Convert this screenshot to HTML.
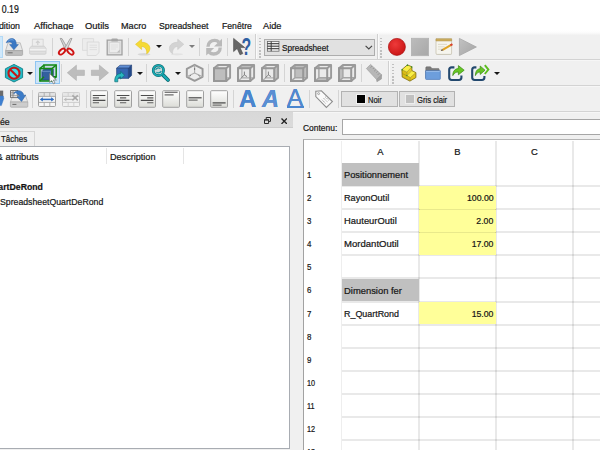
<!DOCTYPE html>
<html lang="fr">
<head>
<meta charset="utf-8">
<title>FreeCAD 0.19</title>
<style>
html,body{margin:0;padding:0}
body{width:600px;height:450px;overflow:hidden;position:relative;background:#fff;
 font-family:"Liberation Sans",sans-serif;font-size:9.4px;color:#111;-webkit-text-stroke:.22px #222}
.a{position:absolute}
.t{position:absolute;white-space:nowrap;line-height:12px;height:12px;transform-origin:0 0;transform:scaleX(.93)}
.r{transform-origin:100% 0}
.bg{position:absolute;left:0;width:600px}
.vs{position:absolute;width:1px;background:#d4d4d4;height:18px}
.hd{position:absolute;width:1.6px;height:20px;margin-left:.4px;
 background:repeating-linear-gradient(180deg,#c0c0c0 0 1.3px,transparent 1.3px 3.05px)}
.ic{position:absolute;width:18px;height:18px;overflow:visible}
.dd{position:absolute;width:0;height:0;border-left:3.3px solid transparent;border-right:3.3px solid transparent;border-top:3.7px solid #161616}
.btn{position:absolute;height:16.6px;background:#e1e1e1;border:1px solid #b2b2b2;box-sizing:border-box}
.fa{-webkit-text-stroke:0;font-size:23px;line-height:24px;color:#4a86cf;text-shadow:0 0 .6px #2f66ad;transform-origin:0 0}
.gl{background:rgba(0,0,0,.085)}
.c{transform-origin:50% 0}
.sw{position:absolute;width:8px;height:8px;box-sizing:border-box}
</style>
</head>
<body>

<!-- title + menu bar -->
<div class="t r" id="ttl" style="right:581.6px;top:3.5px;font-size:10.3px;transform:scaleX(.85)">FreeCAD 0.19</div>
<div id="menubar" style="font-size:9.8px">
 <div class="t r" style="right:579.6px;top:20.2px;transform:scaleX(.9)">Édition</div>
 <div class="t" style="left:33.6px;top:20.2px;transform:scaleX(.97)">Affichage</div>
 <div class="t" style="left:85px;top:20.2px;transform:scaleX(.96)">Outils</div>
 <div class="t" style="left:121.4px;top:20.2px;transform:scaleX(.93)">Macro</div>
 <div class="t" style="left:159.3px;top:20.2px;transform:scaleX(.89)">Spreadsheet</div>
 <div class="t" style="left:221.8px;top:20.2px;transform:scaleX(.885)">Fenêtre</div>
 <div class="t" style="left:263.4px;top:20.2px;transform:scaleX(.94)">Aide</div>
</div>

<!-- toolbar area background -->
<div class="bg" style="top:30px;height:5px;background:linear-gradient(180deg,#ffffff 0,#fdfdfd 40%,#fafafa 60%,#f6f6f6 80%,#f1f1f1 100%)"></div>
<div class="bg" id="tbbg" style="top:35px;height:415px;background:#f0f0f0"></div>
<div class="bg" style="top:59px;height:1px;background:#d3d3d3"></div>
<div class="bg" style="top:60px;height:1px;background:#f6f6f6"></div>
<div class="bg" style="top:85px;height:1px;background:#d3d3d3"></div>
<div class="bg" style="top:86px;height:1px;background:#f6f6f6"></div>
<div class="bg" style="top:111px;height:1px;background:#d3d3d3"></div>
<div class="bg" style="top:112px;height:1px;background:#f6f6f6"></div>

<!-- ROW1 -->
<div id="row1">
 <!-- hovered button cut at left edge -->
 <div class="a" style="left:-22px;top:35.5px;width:24.5px;height:22.5px;box-sizing:border-box;background:#cfe8fb;border:1px solid #b3d9f5"></div>
 <!-- save as -->
 <svg class="ic" style="left:5px;top:38px" viewBox="0 0 18 18">
  <path d="M3 4.8H15.2L17.6 12.6H.6Z" fill="#e8e8e8" stroke="#acacac" stroke-width=".7"/>
  <path d="M.6 12.6H17.6V16.6Q17.6 17.4 16.8 17.4H1.4Q.6 17.4 .6 16.6Z" fill="#bdbdbd" stroke="#a0a0a0" stroke-width=".7"/>
  <path d="M2.6 14.8H7.6" stroke="#6e6e6e" stroke-width="1"/>
  <path d="M1.2 4.8C2.4 1.4 5.8-.2 8.4.8C10.4 1.6 11.3 3.6 11.3 6.6H13.4L8.9 11.8L4.6 6.6H7.3C7.2 4.4 5.2 3 1.2 4.8Z" fill="#3a78c4" stroke="#2c62a6" stroke-width=".5"/>
  <path d="M3 3.4C4.6 1.6 7 1.2 8.6 2.2" fill="none" stroke="#7fb0e6" stroke-width=".8"/>
 </svg>
 <!-- print (disabled) -->
 <svg class="ic" style="left:29px;top:38px" viewBox="0 0 18 18">
  <path d="M3.4 1.2H14.2V8.6H3.4Z" fill="#ededed" stroke="#d2d2d2" stroke-width=".8"/>
  <path d="M8.8 3V7M7 4.8L8.8 3L10.6 4.8" stroke="#cfcfcf" stroke-width="1.2" fill="none"/>
  <path d="M2.2 8.2H15.4L17 10.4V15.2Q17 16.2 16 16.2H1.6Q.6 16.2 .6 15.2V10.4Z" fill="#e0e0e0" stroke="#cdcdcd" stroke-width=".8"/>
  <path d="M.8 11.8H16.8" stroke="#f4f4f4" stroke-width="1.4"/>
  <path d="M.8 13.4H16.8" stroke="#d3d3d3" stroke-width=".8"/>
 </svg>
 <div class="vs" style="left:52px;top:38px"></div>
 <!-- cut -->
 <svg class="ic" style="left:58px;top:38px" viewBox="0 0 18 18">
  <path d="M2.2.4L4 .6L10.2 11.4L7.6 12.4Z" fill="#d4d4d4" stroke="#8e8e8e" stroke-width=".7"/>
  <path d="M14 .4L12.2.6L6 11.4L8.6 12.4Z" fill="#dcdcdc" stroke="#8e8e8e" stroke-width=".7"/>
  <ellipse cx="4" cy="13.6" rx="3.7" ry="2.1" transform="rotate(-42 4 13.6)" fill="none" stroke="#d01515" stroke-width="1.9"/>
  <ellipse cx="12.4" cy="13.6" rx="3.7" ry="2.1" transform="rotate(42 12.4 13.6)" fill="none" stroke="#d01515" stroke-width="1.9"/>
 </svg>
 <!-- copy (disabled) -->
 <svg class="ic" style="left:81.5px;top:38px" viewBox="0 0 18 18">
  <path d="M.5.6H11.6V12.4H.5Z" fill="#ececec" stroke="#d9d9d9" stroke-width=".8"/>
  <path d="M5.2 4H17V14.6L14 17.5H5.2Z" fill="#eeeeee" stroke="#d6d6d6" stroke-width=".8"/>
  <path d="M7.5 7.2H15M7.5 9.4H15M7.5 11.6H15" stroke="#dedede" stroke-width="1"/>
 </svg>
 <!-- paste -->
 <svg class="ic" style="left:105.5px;top:38px" viewBox="0 0 18 18">
  <path d="M1.2 2.2H16V16.8H1.2Z" fill="#e2e2e2" stroke="#a0a0a0" stroke-width="1.3"/>
  <path d="M3.4 4.4H13.8V14.6H3.4Z" fill="#ececec" stroke="#c9c9c9" stroke-width=".6"/>
  <path d="M5.4 3.6V1.6Q5.4.4 6.6.4H10.6Q11.8.4 11.8 1.6V3.6Z" fill="#a6a6a6"/>
  <path d="M10.8 14.6L13.8 11.6V14.6Z" fill="#bebebe"/>
  <path d="M5 7H12M5 9H12M5 11H10" stroke="#dcdcdc" stroke-width=".7"/>
 </svg>
 <div class="vs" style="left:128px;top:38px"></div>
 <!-- undo -->
 <svg class="ic" style="left:134.5px;top:38px" viewBox="0 0 18 18">
  <ellipse cx="9" cy="16.3" rx="6.5" ry="1.2" fill="#000" opacity=".1"/>
  <path d="M.5 6.3L6.6 1.2V4.3C11.4 4.1 15 6.9 14.9 10.5C14.8 13 13.4 14.9 11.6 15.8C12.2 12.4 10.6 8.8 6.6 8.4V11.5Z" fill="#f5da35" stroke="#dfbd22" stroke-width=".5"/>
 </svg>
 <div class="dd" style="left:156.2px;top:45.3px"></div>
 <!-- redo (disabled) -->
 <svg class="ic" style="left:168.6px;top:38px" viewBox="0 0 18 18">
  <ellipse cx="8" cy="16.3" rx="6" ry="1.1" fill="#000" opacity=".05"/>
  <path d="M14.8 6.3L8.7 1.2V4.3C3.9 4.1 .3 6.9 .4 10.5C.5 13 1.9 14.9 3.7 15.8C3.1 12.4 4.7 8.8 8.7 8.4V11.5Z" fill="#d3d3d3" stroke="#cacaca" stroke-width=".6"/>
 </svg>
 <div class="dd" style="left:189.2px;top:45.3px;border-top-color:#7d7d7d"></div>
 <div class="vs" style="left:199px;top:38px"></div>
 <!-- refresh -->
 <svg class="ic" style="left:206px;top:38px" viewBox="0 0 18 18">
  <path d="M2 8.8C2 4.6 5.2 2.4 8.6 2.4C10.4 2.4 11.8 3 13 4.2" fill="none" stroke="#b9b9b9" stroke-width="3.4"/>
  <path d="M16 .8V8.4H8Z" fill="#b9b9b9"/>
  <path d="M14.2 9.6C14.2 13.8 11 16 7.6 16C5.8 16 4.4 15.4 3.2 14.2" fill="none" stroke="#b9b9b9" stroke-width="3.4"/>
  <path d="M.2 17.6V10H8.2Z" fill="#b9b9b9"/>
 </svg>
 <div class="vs" style="left:227px;top:38px"></div>
 <!-- what's this -->
 <svg class="ic" style="left:233px;top:38px" viewBox="0 0 18 18">
  <path d="M.6.4V13.6L4.2 10.4L7 16.8L9.8 15.6L7 9.6H11.8Z" fill="#666" stroke="#484848" stroke-width=".6"/>
  <text transform="translate(8.6 17) scale(.66 1)" font-family="Liberation Sans, sans-serif" font-weight="bold" font-size="24" fill="#2f5fa3">?</text>
 </svg>
 <!-- toolbar break -->
 <div class="a" style="left:255px;top:34px;width:1px;height:25px;background:#d0d0d0"></div>
 <div class="a" style="left:256px;top:34px;width:1px;height:25px;background:#fafafa"></div>
 <div class="hd" style="left:258.8px;top:37.5px"></div>
 <!-- workbench combo -->
 <div class="a" style="left:263.5px;top:38.5px;width:111px;height:17px;box-sizing:border-box;background:#e1e1e1;border:1px solid #adadad"></div>
 <svg class="a" style="left:267.3px;top:41.2px;width:12.4px;height:10.6px" viewBox="0 0 12.4 10.6">
  <rect x=".4" y=".4" width="11.6" height="9.8" fill="#f4f4f4" stroke="#6a6a6a" stroke-width=".8"/>
  <path d="M.4 2.7H12M.4 5.2H12M.4 7.7H12" stroke="#2d2d2d" stroke-width="1"/>
  <path d="M4.2.4V10.2" stroke="#3a3a3a" stroke-width="1"/>
 </svg>
 <div class="t" style="left:281.6px;top:42.2px;transform:scaleX(.875)">Spreadsheet</div>
 <svg class="a" style="left:364px;top:44px;width:10px;height:7px" viewBox="0 0 10 7"><path d="M1.6 1.8L4.8 5L8 1.8" fill="none" stroke="#444" stroke-width="1.1"/></svg>
 <div class="a" style="left:376.5px;top:34px;width:1px;height:25px;background:#d0d0d0"></div>
 <div class="a" style="left:377.5px;top:34px;width:1px;height:25px;background:#fafafa"></div>
 <div class="hd" style="left:380px;top:37.5px"></div>
 <!-- macro record -->
 <svg class="ic" style="left:387.5px;top:38px" viewBox="0 0 18 18">
  <defs><radialGradient id="rg" cx=".4" cy=".35" r=".7"><stop offset="0" stop-color="#ee3a3a"/><stop offset="1" stop-color="#c91414"/></radialGradient></defs>
  <circle cx="8.9" cy="8.9" r="8.5" fill="url(#rg)" stroke="#a80f0f" stroke-width=".7"/>
 </svg>
 <!-- stop -->
 <svg class="ic" style="left:411.2px;top:38px" viewBox="0 0 18 18">
  <defs><linearGradient id="sg" x1="0" y1="0" x2="1" y2="1"><stop offset="0" stop-color="#bcbcbc"/><stop offset="1" stop-color="#a8a8a8"/></linearGradient></defs>
  <rect x=".4" y=".3" width="17.2" height="17.4" fill="url(#sg)" stroke="#b2b2b2" stroke-width=".8"/>
 </svg>
 <!-- edit macro -->
 <svg class="ic" style="left:435.4px;top:38px" viewBox="0 0 18 18">
  <path d="M1.4 16.2H16.4V17H1.4Z" fill="#b4b4b4" opacity=".6"/>
  <path d="M1 .8H16.6V15.2Q16.6 16.4 15.4 16.4H2.2Q1 16.4 1 15.2Z" fill="#f6f5ee" stroke="#c2bca8" stroke-width=".7"/>
  <path d="M1 .8H16.6V3H1Z" fill="#cdae5e" stroke="#b3934a" stroke-width=".5"/>
  <path d="M3 6.4H12M3 8.8H9.6M3 11.2H6.6" stroke="#d8d3c2" stroke-width=".8"/>
  <path d="M7.6 11.8L16.2 6.8" stroke="#dfa326" stroke-width="2.1"/>
  <path d="M5.6 13L8.2 12.6L7 10.8Z" fill="#6a5238"/>
  <path d="M15.4 7.3L17.4 6.1" stroke="#d9402e" stroke-width="2.1"/>
 </svg>
 <!-- execute macro -->
 <svg class="ic" style="left:459px;top:38px" viewBox="0 0 18 18">
  <defs><linearGradient id="pg" x1="0" y1="0" x2="1" y2="1"><stop offset="0" stop-color="#c2c2c2"/><stop offset="1" stop-color="#a4a4a4"/></linearGradient></defs>
  <path d="M.4.4L17.4 9L.4 17.6Z" fill="url(#pg)" stroke="#a2a2a2" stroke-width=".7"/>
 </svg>
</div>
<!-- ROW2 -->
<div id="row2">
 <!-- no-entry hexagon -->
 <svg class="ic" style="left:5px;top:63.8px;height:18.4px" viewBox="0 0 18 18.4">
  <path d="M9 .4L17.6 4.8V13.6L9 18L.4 13.6V4.8Z" fill="#22bcc6" stroke="#0f7a83" stroke-width=".9"/>
  <circle cx="9" cy="9.2" r="5.5" fill="#3fe0ea" stroke="#c21a1a" stroke-width="2.1"/>
  <path d="M5.2 5.4L12.8 13" stroke="#c21a1a" stroke-width="2.1"/>
 </svg>
 <div class="dd" style="left:27.4px;top:71.6px"></div>
 <!-- bounding box (checked) -->
 <div class="a" style="left:35.3px;top:61.3px;width:24.4px;height:22.4px;box-sizing:border-box;background:#cce4f7;border:1px solid #8fc5f2"></div>
 <svg class="ic" style="left:39px;top:64px" viewBox="0 0 18 18">
  <path d="M5 1H17.2V12.8H5Z" fill="#c4d6e6" stroke="#128812" stroke-width="1.5"/>
  <path d="M.9 4.6H13V17.1H.9Z" fill="#7d9cc4" opacity=".55"/>
  <path d="M3 7.4L5.6 5H14.4V13.6L11.6 16H3Z" fill="#33609f" stroke="#1f4173" stroke-width=".6"/>
  <path d="M3 7.4H11.6V16M11.6 7.4L14.4 5" stroke="#6f95cc" stroke-width=".8" fill="none"/>
  <path d="M.9 4.6H13V17.1H.9Z" fill="none" stroke="#128812" stroke-width="1.5"/>
  <path d="M.9 4.6L5 1M13 4.6L17.2 1M13 17.1L17.2 12.8M.9 17.1L5 12.8" stroke="#128812" stroke-width="1.4"/>
  <path d="M10.6 9.6V18.4L12.8 16.6L14.4 19.8L16 19L14.4 16H17.4Z" fill="#fbfbfb" stroke="#707070" stroke-width=".7"/>
 </svg>
 <div class="vs" style="left:61.3px;top:64px"></div>
 <!-- back / forward -->
 <svg class="ic" style="left:66.6px;top:64px" viewBox="0 0 18 18">
  <path d="M.3 8.8L9.4 1.2V6.2H17.4V11.4H9.4V16.4Z" fill="#bdbdbd" stroke="#adadad" stroke-width=".6"/>
 </svg>
 <svg class="ic" style="left:90.6px;top:64px" viewBox="0 0 18 18">
  <path d="M17.5 8.8L8.4 1.2V6.2H.4V11.4H8.4V16.4Z" fill="#bdbdbd" stroke="#adadad" stroke-width=".6"/>
 </svg>
 <!-- link / go to -->
 <svg class="ic" style="left:114.4px;top:64px" viewBox="0 0 18 18">
  <path d="M2.6 4.2L6 1.2H17.6L14.4 4.2Z" fill="#5f8ed4" stroke="#1c3d74" stroke-width=".6"/>
  <path d="M14.4 4.2L17.6 1.2V11.4L14.4 14.4Z" fill="#23498a" stroke="#1c3d74" stroke-width=".6"/>
  <path d="M2.6 4.2H14.4V14.4H2.6Z" fill="#3566b2" stroke="#1c3d74" stroke-width=".6"/>
  <path d="M.8 17.8C.4 12.6 3 9.6 6.6 9.6V7.4L10.6 11.2L6.6 15V12.8C4.6 12.8 3.4 14.6 3.8 17.8Z" fill="#27b7bf" stroke="#0c6f77" stroke-width=".7"/>
 </svg>
 <div class="dd" style="left:136.8px;top:71.6px"></div>
 <div class="vs" style="left:146.3px;top:64px"></div>
 <!-- zoom fit -->
 <svg class="ic" style="left:152.4px;top:64.4px" viewBox="0 0 18 18">
  <path d="M10.4 10.4L16 16" stroke="#0a646b" stroke-width="3.8" stroke-linecap="round"/>
  <path d="M10.4 10.4L16 16" stroke="#17aab3" stroke-width="2.4" stroke-linecap="round"/>
  <circle cx="6.4" cy="6.4" r="5.2" fill="#c9d9db" stroke="#0a646b" stroke-width="2.6"/>
  <circle cx="6.4" cy="6.4" r="5.2" fill="none" stroke="#17aab3" stroke-width="1.6"/>
  <path d="M3.6 5.8C4.2 4 6.6 3.4 8.4 4.6M9.2 7C8.6 8.8 6.2 9.4 4.4 8.2" stroke="#17959d" stroke-width="1.3" fill="none"/>
 </svg>
 <div class="dd" style="left:174.6px;top:71.6px"></div>
 <!-- isometric -->
 <svg class="ic" style="left:185.6px;top:64.4px" viewBox="0 0 18 18">
  <path d="M8.6.8L16.6 4.8V12.8L8.6 16.8L.8 12.8V4.8Z" fill="#ededed" stroke="#999999" stroke-width="1.9" stroke-linejoin="round"/>
  <path d="M8.6.8V9L.8 12.8M8.6 9L16.6 12.8" stroke="#adadad" stroke-width="1.1" fill="none"/>
  <path d="M5 11.2L3.6 12.4M12.4 11.2L13.8 12.4M8.6 4V6" stroke="#707070" stroke-width=".9"/>
 </svg>
 <div class="vs" style="left:207.7px;top:64px"></div>
 <!-- std views -->
 <svg class="ic" style="left:213.4px;top:64px" viewBox="0 0 18 18">
  <path d="M1.0 4.2L4.9 1.0L17.1 1.0L17.1 13.8L13.2 17.0L1.0 17.0Z" fill="#eaeaea"/>
  <path d="M4.9 13.8H17.1M4.9 1.0V13.8M1.0 17.0L4.9 13.8" fill="none" stroke="#b0b0b0" stroke-width="1.2"/>
  <path d="M1.0 4.2L13.2 4.2L13.2 17.0L1.0 17.0Z" fill="#bebebe"/>
  <path d="M1.0 4.2L4.9 1.0H17.1V13.8L13.2 17.0M13.2 4.2L17.1 1.0" fill="none" stroke="#9a9a9a" stroke-width="1.9" stroke-linejoin="round"/>
  <path d="M1.0 4.2H13.2V17.0H1.0Z" fill="none" stroke="#979797" stroke-width="2"/>
 </svg>
 <svg class="ic" style="left:237.4px;top:64px" viewBox="0 0 18 18">
  <path d="M1.0 4.2L4.9 1.0L17.1 1.0L17.1 13.8L13.2 17.0L1.0 17.0Z" fill="#eaeaea"/>
  <path d="M4.9 13.8H17.1M4.9 1.0V13.8M1.0 17.0L4.9 13.8" fill="none" stroke="#b0b0b0" stroke-width="1.2"/>
  <path d="M1.0 4.2L4.9 1.0L17.1 1.0L13.2 4.2Z" fill="#bebebe"/>
  <path d="M1.0 4.2L4.9 1.0H17.1V13.8L13.2 17.0M13.2 4.2L17.1 1.0" fill="none" stroke="#9a9a9a" stroke-width="1.9" stroke-linejoin="round"/>
  <path d="M1.0 4.2H13.2V17.0H1.0Z" fill="none" stroke="#979797" stroke-width="2"/>
  <path d="M7.4 7.6V11L4.4 13.6M7.4 11L10 12.6" fill="none" stroke="#777" stroke-width=".9"/>
 </svg>
 <svg class="ic" style="left:261.4px;top:64px" viewBox="0 0 18 18">
  <path d="M1.0 4.2L4.9 1.0L17.1 1.0L17.1 13.8L13.2 17.0L1.0 17.0Z" fill="#eaeaea"/>
  <path d="M4.9 13.8H17.1M4.9 1.0V13.8M1.0 17.0L4.9 13.8" fill="none" stroke="#b0b0b0" stroke-width="1.2"/>
  <path d="M13.2 4.2L17.1 1.0L17.1 13.8L13.2 17.0Z" fill="#bebebe"/>
  <path d="M1.0 4.2L4.9 1.0H17.1V13.8L13.2 17.0M13.2 4.2L17.1 1.0" fill="none" stroke="#9a9a9a" stroke-width="1.9" stroke-linejoin="round"/>
  <path d="M1.0 4.2H13.2V17.0H1.0Z" fill="none" stroke="#979797" stroke-width="2"/>
  <path d="M7.4 7.6V11L4.4 13.6M7.4 11L10 12.6" fill="none" stroke="#777" stroke-width=".9"/>
 </svg>
 <div class="vs" style="left:284px;top:64px"></div>
 <svg class="ic" style="left:289.6px;top:64px" viewBox="0 0 18 18">
  <path d="M1.0 4.2L4.9 1.0L17.1 1.0L17.1 13.8L13.2 17.0L1.0 17.0Z" fill="#eaeaea"/>
  <path d="M4.9 1.0L17.1 1.0L17.1 13.8L4.9 13.8Z" fill="#bebebe"/>
  <path d="M4.9 13.8H17.1M4.9 1.0V13.8M1.0 17.0L4.9 13.8" fill="none" stroke="#a6a6a6" stroke-width="1.5"/>
  <path d="M1.0 4.2L4.9 1.0H17.1V13.8L13.2 17.0M13.2 4.2L17.1 1.0" fill="none" stroke="#9a9a9a" stroke-width="1.9" stroke-linejoin="round"/>
  <path d="M1.0 4.2H13.2V17.0H1.0Z" fill="none" stroke="#979797" stroke-width="2"/>
 </svg>
 <svg class="ic" style="left:313.6px;top:64px" viewBox="0 0 18 18">
  <path d="M1.0 4.2L4.9 1.0L17.1 1.0L17.1 13.8L13.2 17.0L1.0 17.0Z" fill="#eaeaea"/>
  <path d="M1.0 17.0L4.9 13.8L17.1 13.8L13.2 17.0Z" fill="#bebebe"/>
  <path d="M4.9 13.8H17.1M4.9 1.0V13.8M1.0 17.0L4.9 13.8" fill="none" stroke="#a6a6a6" stroke-width="1.5"/>
  <path d="M1.0 4.2L4.9 1.0H17.1V13.8L13.2 17.0M13.2 4.2L17.1 1.0" fill="none" stroke="#9a9a9a" stroke-width="1.9" stroke-linejoin="round"/>
  <path d="M1.0 4.2H13.2V17.0H1.0Z" fill="none" stroke="#979797" stroke-width="2"/>
 </svg>
 <svg class="ic" style="left:337.6px;top:64px" viewBox="0 0 18 18">
  <path d="M1.0 4.2L4.9 1.0L17.1 1.0L17.1 13.8L13.2 17.0L1.0 17.0Z" fill="#eaeaea"/>
  <path d="M1.0 4.2L4.9 1.0L4.9 13.8L1.0 17.0Z" fill="#bebebe"/>
  <path d="M4.9 13.8H17.1M4.9 1.0V13.8M1.0 17.0L4.9 13.8" fill="none" stroke="#a6a6a6" stroke-width="1.5"/>
  <path d="M1.0 4.2L4.9 1.0H17.1V13.8L13.2 17.0M13.2 4.2L17.1 1.0" fill="none" stroke="#9a9a9a" stroke-width="1.9" stroke-linejoin="round"/>
  <path d="M1.0 4.2H13.2V17.0H1.0Z" fill="none" stroke="#979797" stroke-width="2"/>
 </svg>
 <div class="vs" style="left:361.2px;top:64px"></div>
 <!-- measure -->
 <svg class="ic" style="left:366.4px;top:64px" viewBox="0 0 18 18">
  <path d="M4.6.4L15.6 10.8L10.6 15.5L.4 4.5Z" fill="#b7b7b7" stroke="#a0a0a0" stroke-width=".7"/>
  <path d="M15.6 10.8L15.4 15L10.9 17.7L10.6 15.5Z" fill="#a2a2a2" stroke="#979797" stroke-width=".6"/>
  <path d="M6.2 2L4.6 3.6M8 3.8L6.8 5M9.8 5.6L8.2 7.2M11.6 7.4L10.4 8.6M13.4 9.2L11.8 10.8" stroke="#8a8a8a" stroke-width=".8"/>
 </svg>
 <div class="a" style="left:387.6px;top:61px;width:1px;height:24px;background:#d0d0d0"></div>
 <div class="a" style="left:388.6px;top:61px;width:1px;height:24px;background:#fafafa"></div>
 <div class="hd" style="left:391.8px;top:63.5px"></div>
 <!-- part -->
 <svg class="ic" style="left:400.6px;top:64.4px" viewBox="0 0 18 18">
  <path d="M.9 5.6L5.9 8.1V11.6L9.4 13.6L8.9 17.1L1.2 13.1Z" fill="#d9bd14"/>
  <path d="M.9 5.6L6.4.9L10.9 2.8L5.9 8.1Z" fill="#f8ee45"/>
  <path d="M5.9 8.1L10.9 2.8V6.6L5.9 11.6Z" fill="#e6cd1c"/>
  <path d="M5.9 11.6L10.9 6.6L14.9 8.6L9.4 13.6Z" fill="#f8ee45"/>
  <path d="M9.4 13.6L14.9 8.6V13.6L8.9 17.1Z" fill="#e2c618"/>
  <path d="M.9 5.6L6.4.9L10.9 2.8V6.6L14.9 8.6V13.6L8.9 17.1L1.2 13.1Z" fill="none" stroke="#7a6708" stroke-width=".8" stroke-linejoin="round"/>
  <path d="M.9 5.6L5.9 8.1L10.9 2.8M5.9 8.1V11.6L9.4 13.6L14.9 8.6M5.9 11.6L10.9 6.6M9.4 13.6L8.9 17.1M1 9.4L5.9 11.8" fill="none" stroke="#a08a10" stroke-width=".6"/>
  <circle cx="6.4" cy="1.2" r=".8" fill="#2c8f2c"/><circle cx="10.6" cy="3" r=".8" fill="#2c8f2c"/><circle cx="1.2" cy="5.8" r=".8" fill="#2c8f2c"/><circle cx="5.9" cy="11.6" r=".7" fill="#2c8f2c"/>
 </svg>
 <!-- group -->
 <svg class="ic" style="left:424.5px;top:65.8px" viewBox="0 0 19 19">
  <path d="M.8 12.6V1.8Q.8 .8 1.8 .8H5.8L7.4 2.6H14Q15 2.6 15 3.6V12.6Z" fill="#7a7a7a" stroke="#666" stroke-width=".5"/>
  <path d="M.6 5H16.2V13.4Q16.2 14.2 15.4 14.2H1.4Q.6 14.2 .6 13.4Z" fill="#6d9edc" stroke="#4977b8" stroke-width=".7"/>
  <path d="M1.2 5.8H15.6" stroke="#a2c3ee" stroke-width=".8"/>
 </svg>
 <!-- link make -->
 <svg class="ic" style="left:448.4px;top:64px" viewBox="0 0 18 18">
  <path d="M3 4.4H12V15H3Z" fill="#eef1f4"/>
  <path d="M6.4 3.4H3.6Q1.2 3.4 1.2 5.8V13.6Q1.2 16 3.6 16H11Q13.4 16 13.4 13.6V11.6" fill="none" stroke="#22486e" stroke-width="2.1"/>
  <path d="M4.8 11.6C4.8 7 7.2 4.6 10.4 4.6V1.6L16.2 6.2L10.4 10.8V8C8 8 6.2 9 4.8 11.6Z" fill="#66c625" stroke="#3b8a12" stroke-width=".7"/>
 </svg>
 <!-- link make relative -->
 <svg class="ic" style="left:471.4px;top:64px" viewBox="0 0 18 18">
  <path d="M3 4.4H12V15H3Z" fill="#eef1f4"/>
  <path d="M5.4 3.4H3.6Q1.2 3.4 1.2 5.8V13.6Q1.2 16 3.6 16H11Q13.4 16 13.4 13.6V12" fill="none" stroke="#22486e" stroke-width="2.1"/>
  <path d="M4.4 11.6C4.4 7 6.4 4.8 9.2 4.8V2L14 6.2L9.2 10.4V8C7.2 8 5.6 9 4.4 11.6Z" fill="#66c625" stroke="#3b8a12" stroke-width=".7"/>
  <path d="M13.8 1.2L17.4 5.6L13.8 10" fill="none" stroke="#5bbd1e" stroke-width="1.9"/>
 </svg>
 <div class="dd" style="left:493.5px;top:71.6px"></div>
</div>
<!-- ROW3 -->
<div id="row3">
 <!-- cut-off icon at left edge -->
 <svg class="ic" style="left:-14.4px;top:90.4px" viewBox="0 0 18 18">
  <path d="M11 .6H17.2V6.2H11Z" fill="#6c6c6c"/>
  <path d="M10 6H17.4L17.8 8.6L15.4 15.6H10Z" fill="#3f80d0" stroke="#3571bd" stroke-width=".4"/>
 </svg>
 <!-- export sheet -->
 <svg class="ic" style="left:9.6px;top:90.2px" viewBox="0 0 18 18">
  <path d="M2.8 5.4H15.4L17.8 12H.4Z" fill="#e9e9e9" stroke="#b0b0b0" stroke-width=".7"/>
  <path d="M.4 12H17.8V16.4Q17.8 17.2 17 17.2H1.2Q.4 17.2 .4 16.4Z" fill="#cdcdcd" stroke="#a8a8a8" stroke-width=".7"/>
  <path d="M2.4 14.4H6.4" stroke="#6a6a6a" stroke-width="1"/>
  <path d="M.5.5H8V7.6H.5Z" fill="#dcdcdc" stroke="#5a5a5a" stroke-width=".8"/>
  <path d="M.5 2.8H8M.5 5.2H8M3 .5V7.6" stroke="#6b6b6b" stroke-width=".6"/>
  <path d="M3.6 3.4C5.4.8 9 0 11.2 1.4C12.8 2.4 13.6 3.8 13.8 5.4L15.8 5L11.6 11.4L7 6.9L9.6 6.4C9.2 4.6 7.4 3.2 3.6 3.4Z" fill="#3c7cc8" stroke="#2a5e9e" stroke-width=".5"/>
  <circle cx="5.6" cy="4" r="1" fill="#e8f0fa"/>
 </svg>
 <div class="vs" style="left:32.4px;top:90.2px"></div>
 <!-- merge cells -->
 <svg class="ic" style="left:38.2px;top:91.6px;height:15px" viewBox="0 0 18 15">
  <rect x=".5" y=".5" width="17" height="14" rx="1" fill="#f6f6f6" stroke="#979797" stroke-width=".9"/>
  <path d="M.5.5H17.5V4.4H.5Z" fill="#dadada" opacity=".7"/>
  <path d="M.5 4.4H17.5M.5 10.4H17.5" stroke="#a3a3a3" stroke-width=".9"/>
  <path d="M6.2.5V4.4M11.8.5V4.4M6.2 10.4V14.5M11.8 10.4V14.5" stroke="#a9a9a9" stroke-width=".9"/>
  <path d="M3.6 7.4H14.4" stroke="#2c6cc2" stroke-width="1.5"/>
  <path d="M1.8 7.4L4.8 5.2V9.6ZM16.2 7.4L13.2 5.2V9.6Z" fill="#2c6cc2"/>
 </svg>
 <!-- split cell (disabled) -->
 <svg class="ic" style="left:62.2px;top:91.6px;height:15px" viewBox="0 0 18 15">
  <rect x=".5" y=".5" width="17" height="14" rx="1" fill="#f1f1f1" stroke="#c2c2c2" stroke-width=".9"/>
  <path d="M.5.5H17.5V4.4H.5Z" fill="#e2e2e2" opacity=".7"/>
  <path d="M.5 4.4H17.5M.5 10.4H17.5" stroke="#c9c9c9" stroke-width=".9"/>
  <path d="M6.2.5V4.4M11.8.5V4.4M6.2 10.4V14.5M11.8 10.4V14.5" stroke="#cecece" stroke-width=".9"/>
  <path d="M3.2 7.4H11" stroke="#bdbdbd" stroke-width="1.3"/>
  <path d="M1.6 7.4L4.4 5.4V9.4Z" fill="#bdbdbd"/>
  <path d="M10.4 3.4L15.8 8.4M15.8 3.4L10.4 8.4" stroke="#a7a7a7" stroke-width="1.5"/>
 </svg>
 <div class="vs" style="left:85.6px;top:90.2px"></div>
 <!-- alignment -->
 <svg class="ic" style="left:90.4px;top:90.4px" viewBox="0 0 18 18">
  <defs><linearGradient id="ag" x1="0" y1="0" x2="0" y2="1"><stop offset="0" stop-color="#ffffff"/><stop offset="1" stop-color="#dbdcd7"/></linearGradient></defs>
  <rect x=".7" y=".7" width="16.8" height="16.6" rx=".9" fill="url(#ag)" stroke="#a0a0a0" stroke-width="1"/>
  <path d="M2.8 5.5H15.4M2.8 10.3H15.4" stroke="#4c4c4c" stroke-width="1.15"/>
  <path d="M2.8 7.9H9M2.8 12.7H9" stroke="#5e5e5e" stroke-width="1.1"/>
 </svg>
 <svg class="ic" style="left:114.4px;top:90.4px" viewBox="0 0 18 18">
  <rect x=".7" y=".7" width="16.8" height="16.6" rx=".9" fill="url(#ag)" stroke="#a0a0a0" stroke-width="1"/>
  <path d="M2.8 5.5H15.4M2.8 10.3H15.4" stroke="#4c4c4c" stroke-width="1.15"/>
  <path d="M6 7.9H12.2M6 12.7H12.2" stroke="#5e5e5e" stroke-width="1.1"/>
 </svg>
 <svg class="ic" style="left:138.4px;top:90.4px" viewBox="0 0 18 18">
  <rect x=".7" y=".7" width="16.8" height="16.6" rx=".9" fill="url(#ag)" stroke="#a0a0a0" stroke-width="1"/>
  <path d="M2.8 5.5H15.4M2.8 10.3H15.4" stroke="#4c4c4c" stroke-width="1.15"/>
  <path d="M9.2 7.9H15.4M9.2 12.7H15.4" stroke="#5e5e5e" stroke-width="1.1"/>
 </svg>
 <svg class="ic" style="left:162px;top:90.4px" viewBox="0 0 18 18">
  <rect x=".7" y=".7" width="16.8" height="16.6" rx=".9" fill="url(#ag)" stroke="#a0a0a0" stroke-width="1"/>
  <path d="M2.6 2.3H15.6" stroke="#6a6a6a" stroke-width="1.2"/>
  <path d="M2.6 4.9H11.6" stroke="#505050" stroke-width="1.05"/>
 </svg>
 <svg class="ic" style="left:186px;top:90.4px" viewBox="0 0 18 18">
  <rect x=".7" y=".7" width="16.8" height="16.6" rx=".9" fill="url(#ag)" stroke="#a0a0a0" stroke-width="1"/>
  <path d="M2.6 7.8H15.6" stroke="#4c4c4c" stroke-width="1.2"/>
  <path d="M2.6 10.1H11.6" stroke="#5e5e5e" stroke-width="1.05"/>
 </svg>
 <svg class="ic" style="left:210px;top:90.4px" viewBox="0 0 18 18">
  <rect x=".7" y=".7" width="16.8" height="16.6" rx=".9" fill="url(#ag)" stroke="#a0a0a0" stroke-width="1"/>
  <path d="M2.6 12.9H15.6" stroke="#444" stroke-width="1.2"/>
  <path d="M2.6 15.1H11.6" stroke="#5e5e5e" stroke-width="1.05"/>
 </svg>
 <div class="vs" style="left:233px;top:90.2px"></div>
 <!-- bold / italic / underline -->
 <div class="a fa" style="left:238.6px;top:86.6px;font-weight:bold;transform:scaleX(1.04);color:#4a86d0">A</div>
 <div class="a fa" style="left:262.4px;top:86.6px;font-style:italic;font-weight:bold;color:#5a8fd4;transform:scaleX(1.02)">A</div>
 <div class="a fa" style="left:286.8px;top:86.4px;transform:scaleX(1.05);color:#5289d0">A</div>
 <div class="a" style="left:287px;top:106.4px;width:16.6px;height:1.5px;background:#4a86cf"></div>
 <div class="vs" style="left:309px;top:90.2px"></div>
 <!-- alias / tag -->
 <svg class="ic" style="left:314.8px;top:90.4px" viewBox="0 0 18 18">
  <path d="M.8 1.2L6.4.8L17.4 11.6L11.4 17.4L.8 6.6Z" fill="#fafafa" stroke="#8d8d8d" stroke-width="1.1"/>
  <circle cx="3.6" cy="3.6" r="1" fill="#f0f0f0" stroke="#8d8d8d" stroke-width=".7"/>
  <path d="M8.6 8.2L12.6 12.2M10.2 6.8L14.2 10.8M7 9.8L11 13.8" stroke="#9a9a9a" stroke-width="1" stroke-dasharray="1.1 .7"/>
 </svg>
 <div class="vs" style="left:338.2px;top:90.2px"></div>
 <!-- colour buttons -->
 <div class="btn" style="left:341.3px;top:90.8px;width:56.6px"></div>
 <div class="a" style="left:355.6px;top:94px;width:10px;height:10px;box-sizing:border-box;background:#000;border:1px solid #f2f2f2"></div>
 <div class="t" style="left:368px;top:94.4px;transform:scaleX(0.8)">Noir</div>
 <div class="btn" style="left:399px;top:90.8px;width:56.4px"></div>
 <div class="a" style="left:405px;top:94px;width:10px;height:10px;box-sizing:border-box;background:#c0c0c0;border:1px solid #ededed"></div>
 <div class="t" style="left:417.4px;top:94.4px;transform:scaleX(0.815)">Gris clair</div>
</div>

<!-- left dock -->
<div id="dock">
 <div class="a" style="left:0;top:111.6px;width:293px;height:16px;background:linear-gradient(180deg,#d8d8d8,#dbdbdb)"></div>
 <div class="a" style="left:0;top:126.8px;width:293px;height:1px;background:#cdcdcd"></div>
 <div class="t r" style="right:590.6px;top:116.2px">Vue combinée</div>
 <svg class="a" style="left:264px;top:117px;width:7px;height:7px" viewBox="0 0 7 7"><path d="M2.2 2.2V.5H6.5V4.4H4.6" fill="none" stroke="#2a2a2a" stroke-width="1"/><path d="M.5 2.6H4.6V6.5H.5Z" fill="none" stroke="#2a2a2a" stroke-width="1"/><path d="M.5 3.1H4.6" stroke="#2a2a2a" stroke-width="1"/></svg>
 <svg class="a" style="left:280.6px;top:117.8px;width:6.4px;height:6.4px" viewBox="0 0 6.4 6.4"><path d="M.5.5L5.9 5.9M5.9.5L.5 5.9" stroke="#222" stroke-width="1.35"/></svg>
 <!-- tabs -->
 <div class="a" style="left:-30px;top:130.6px;width:65.4px;height:15.4px;border:1px solid #d6d6d6;border-bottom:none;box-sizing:border-box;background:#f0f0f0"></div>
 <div class="t" style="left:1.2px;top:132.7px;transform:scaleX(.85)">Tâches</div>
 <!-- tree -->
 <div class="a" style="left:-2px;top:146px;width:292px;height:303px;box-sizing:border-box;border:1px solid #a8acb2;background:#fff"></div>
 <div class="a" style="left:106px;top:148px;width:1px;height:16px;background:#e5e5e5"></div>
 <div class="a" style="left:183px;top:148px;width:1px;height:16px;background:#e5e5e5"></div>
 <div class="t r" style="right:561.2px;top:150.6px;transform:scaleX(1.0)">Étiquettes &amp; attributs</div>
 <div class="t" style="left:110px;top:150.6px;transform:scaleX(.97)">Description</div>
 <div class="t r" style="right:557px;top:180.5px;font-weight:bold">QuartDeRond</div>
 <div class="t" style="left:0px;top:196px">SpreadsheetQuartDeRond</div>
</div>

<!-- spreadsheet -->
<div id="sheet">
 <div class="t" style="left:303px;top:122px;transform:scaleX(0.9)">Contenu:</div>
 <div class="a" style="left:342px;top:119.4px;width:270px;height:15.6px;box-sizing:border-box;border:1px solid #a6a6a6;background:#fff"></div>
 <div class="a" id="tbl" style="left:303px;top:139.2px;width:300px;height:320px;box-sizing:border-box;border:1px solid #a2a2a2;border-top-color:#b4b4b4;border-right:none;background:#fff"></div>
 <div class="a" style="left:419.4px;top:186.4px;width:76.2px;height:68.5px;background:#ffff99"></div>
 <div class="a gl" style="left:342px;top:185.0px;width:258px;height:2px"></div>
 <div class="a gl" style="left:342px;top:208.1px;width:258px;height:2px"></div>
 <div class="a gl" style="left:342px;top:231.2px;width:258px;height:2px"></div>
 <div class="a gl" style="left:342px;top:254.3px;width:258px;height:2px"></div>
 <div class="a gl" style="left:342px;top:277.4px;width:258px;height:2px"></div>
 <div class="a gl" style="left:342px;top:300.5px;width:258px;height:2px"></div>
 <div class="a gl" style="left:342px;top:323.6px;width:258px;height:2px"></div>
 <div class="a gl" style="left:342px;top:346.7px;width:258px;height:2px"></div>
 <div class="a gl" style="left:342px;top:369.8px;width:258px;height:2px"></div>
 <div class="a gl" style="left:342px;top:392.9px;width:258px;height:2px"></div>
 <div class="a gl" style="left:342px;top:416.0px;width:258px;height:2px"></div>
 <div class="a gl" style="left:342px;top:439.1px;width:258px;height:2px"></div>
 <div class="a gl" style="left:418.0px;top:140.5px;width:2px;height:310px"></div>
 <div class="a gl" style="left:495.0px;top:140.5px;width:2px;height:310px"></div>
 <div class="a gl" style="left:572.0px;top:140.5px;width:2px;height:310px"></div>
 <div class="a" style="left:342.4px;top:163.3px;width:76.2px;height:22.3px;background:#c0c0c0"></div>
 <div class="a" style="left:342.4px;top:278.8px;width:76.2px;height:22.3px;background:#c0c0c0"></div>
 <div class="a" style="left:419.4px;top:186.4px;width:76.2px;height:22.3px;background:#ffff99"></div>
 <div class="a" style="left:419.4px;top:209.5px;width:76.2px;height:22.3px;background:#ffff99"></div>
 <div class="a" style="left:419.4px;top:232.6px;width:76.2px;height:22.3px;background:#ffff99"></div>
 <div class="a" style="left:419.4px;top:301.9px;width:76.2px;height:22.3px;background:#ffff99"></div>
 <div class="a" style="left:341.4px;top:140.5px;width:1px;height:310px;background:#eeeeee"></div>
 <div class="t c" style="left:370.4px;width:20px;top:146px;text-align:center;transform:scaleX(1.0)">A</div>
 <div class="t c" style="left:447.3px;width:20px;top:146px;text-align:center;transform:scaleX(1.0)">B</div>
 <div class="t c" style="left:524.3px;width:20px;top:146px;text-align:center;transform:scaleX(1.0)">C</div>
 <div class="t" style="left:306.8px;top:169px;transform:scaleX(0.84)">1</div>
 <div class="t" style="left:306.8px;top:192px;transform:scaleX(0.84)">2</div>
 <div class="t" style="left:306.8px;top:215px;transform:scaleX(0.84)">3</div>
 <div class="t" style="left:306.8px;top:238px;transform:scaleX(0.84)">4</div>
 <div class="t" style="left:306.8px;top:261px;transform:scaleX(0.84)">5</div>
 <div class="t" style="left:306.8px;top:284px;transform:scaleX(0.84)">6</div>
 <div class="t" style="left:306.8px;top:308px;transform:scaleX(0.84)">7</div>
 <div class="t" style="left:306.8px;top:331px;transform:scaleX(0.84)">8</div>
 <div class="t" style="left:306.8px;top:354px;transform:scaleX(0.84)">9</div>
 <div class="t" style="left:306.8px;top:377px;transform:scaleX(0.78)">10</div>
 <div class="t" style="left:306.8px;top:400px;transform:scaleX(0.78)">11</div>
 <div class="t" style="left:306.8px;top:423px;transform:scaleX(0.78)">12</div>
 <div class="t" style="left:306.8px;top:446px;transform:scaleX(0.78)">13</div>
 <div class="t" style="left:344.1px;top:169.0px;transform:scaleX(0.99)">Positionnement</div>
 <div class="t" style="left:344.1px;top:192.1px;transform:scaleX(0.975)">RayonOutil</div>
 <div class="t" style="left:344.1px;top:215.2px;transform:scaleX(1.0)">HauteurOutil</div>
 <div class="t" style="left:344.1px;top:238.3px;transform:scaleX(1.02)">MordantOutil</div>
 <div class="t" style="left:344.1px;top:284.5px;transform:scaleX(1.0)">Dimension fer</div>
 <div class="t" style="left:344.1px;top:307.6px;transform:scaleX(0.95)">R_QuartRond</div>
 <div class="t r" style="right:106.6px;top:192.1px;transform:scaleX(.93)">100.00</div>
 <div class="t r" style="right:106.6px;top:215.2px;transform:scaleX(.93)">2.00</div>
 <div class="t r" style="right:106.6px;top:238.3px;transform:scaleX(.93)">17.00</div>
 <div class="t r" style="right:106.6px;top:307.6px;transform:scaleX(.93)">15.00</div>
</div>

</body>
</html>
